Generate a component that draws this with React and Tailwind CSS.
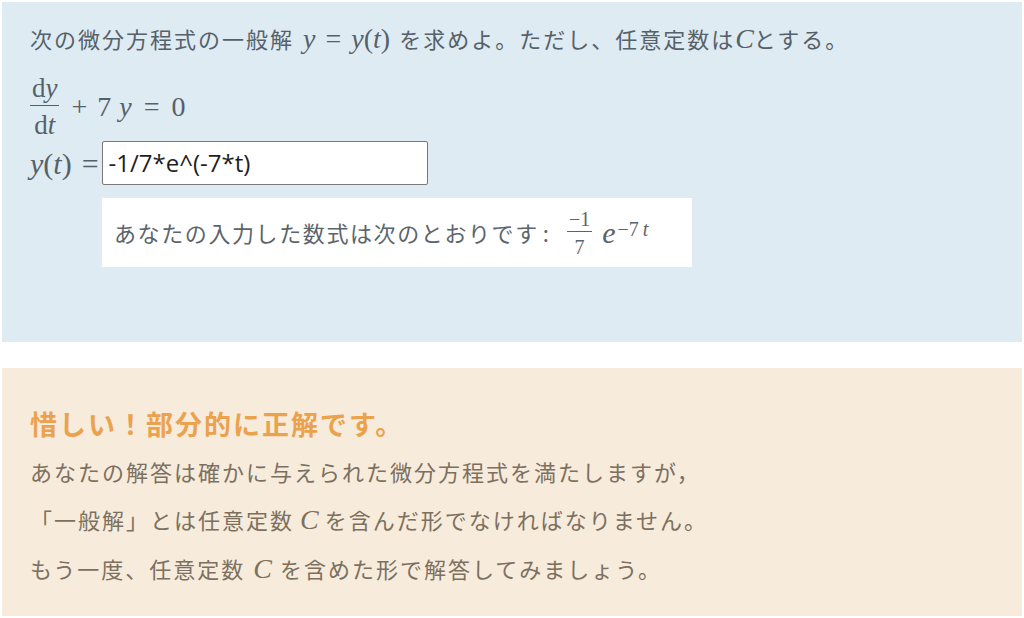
import React from 'react';

const jp = "font-['Meiryo','Noto_Sans_CJK_JP',sans-serif]";
const mathFont = "font-['Liberation_Serif',serif] tracking-normal";

const Frac = ({ num, den, className = '', lineClass = '' }) => (
  <span className={`inline-flex flex-col items-center align-middle ${className}`}>
    <span className="leading-none px-[2px]">{num}</span>
    <span className={`w-full h-px bg-current ${lineClass}`} />
    <span className="leading-none px-[2px] pt-[3px]">{den}</span>
  </span>
);

const I = ({ children }) => <span className="italic">{children}</span>;

const App = () => {
  return (
    <div className="min-h-[618px] bg-white p-[2px] flex flex-col">
      {/* question */}
      <div className={`bg-[#dfebf2] h-[340px] pl-[28px] pt-[18px] text-[#55616a] ${jp}`}>
        <div className="text-[22px] tracking-[2px] leading-[36px] whitespace-nowrap">
          次の微分方程式の一般解
          <span className={`${mathFont} text-[28px] mx-[9px]`}>
            <I>y</I>
            <span className="mx-[10px]">=</span>
            <I>y</I>(<I>t</I>)
          </span>
          を求めよ。ただし、任意定数は
          <span className={`${mathFont} text-[28px]`}><I>C</I></span>
          とする。
        </div>

        <div className={`flex items-center h-[52px] mt-[24px] ${mathFont} text-[28px]`}>
          <Frac
            className="text-[27px]"
            lineClass="my-[3px]"
            num={<span>d<I>y</I></span>}
            den={<span>d<I>t</I></span>}
          />
          <span className="ml-[12px] whitespace-nowrap">
            <span className="mr-[10px]">+</span>7<span className="ml-[8px]"><I>y</I></span>
            <span className="mx-[12px]">=</span>0
          </span>
        </div>

        <div className="flex items-center mt-[8px] h-[44px]">
          <span className={`${mathFont} text-[30px] whitespace-nowrap`}>
            <I>y</I>(<I>t</I>)<span className="ml-[10px]">=</span>
          </span>
          <div className="ml-[3px] w-[326px] h-[44px] bg-white border border-[#7a7a7a] rounded-[2px] flex items-center pl-[6px] font-['Open_Sans',sans-serif] text-[24px] text-[#1e1e1e]">
            -1/7*e^(-7*t)
          </div>
        </div>

        <div className="mt-[13px] ml-[72px] w-[590px] h-[69px] bg-white flex items-center pl-[12px] text-[#5b646b]">
          <span className="text-[22px] tracking-[1.6px] whitespace-nowrap">あなたの入力した数式は次のとおりです</span>
          <span className="text-[22px] ml-[4px] mr-[18px]">:</span>
          <span className={`${mathFont} flex items-center`}>
            <Frac className="text-[20px]" lineClass="my-[2px]" num="−1" den="7" />
            <span className="ml-[10px] text-[30px] italic leading-none">
              e<sup className="text-[20px] not-italic relative -top-[7px] ml-[2px]">−7<span className="ml-[4px] italic">t</span></sup>
            </span>
          </span>
        </div>
      </div>

      <div className="h-[26px]" />

      {/* feedback */}
      <div className={`bg-[#f7ebdc] flex-1 pl-[28px] pt-[36px] ${jp}`}>
        <div className="text-[27px] tracking-[2px] leading-[40px] font-bold text-[#eba24c]">
          惜しい！部分的に正解です。
        </div>
        <div className="mt-[3px] text-[22px] tracking-[2px] leading-[48px] text-[#7c705f]">
          <p>あなたの解答は確かに与えられた微分方程式を満たしますが，</p>
          <p>
            「一般解」とは任意定数
            <span className={`${mathFont} italic text-[28px] mx-[6px]`}>C</span>
            を含んだ形でなければなりません。
          </p>
          <p>
            もう一度、任意定数
            <span className={`${mathFont} italic text-[28px] mx-[8px]`}>C</span>
            を含めた形で解答してみましょう。
          </p>
        </div>
      </div>
    </div>
  );
};

export default App;
